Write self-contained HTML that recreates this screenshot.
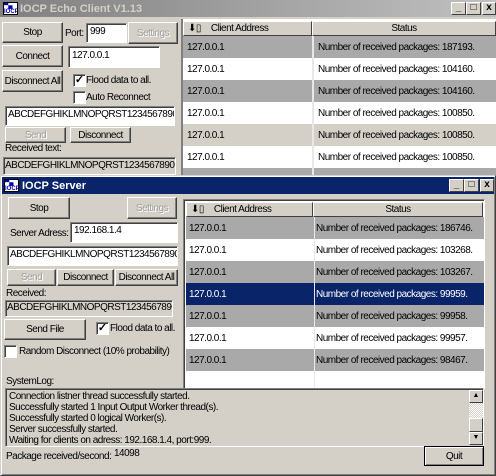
<!DOCTYPE html><html><head><style>
*{box-sizing:border-box;margin:0;padding:0}
body{width:496px;height:476px;background:#d4d0c8;font:10px "Liberation Sans",sans-serif;letter-spacing:-0.5px;position:relative;overflow:hidden;color:#000}
.a{position:absolute;white-space:nowrap}
.btn{position:absolute;background:#d4d0c8;border:1px solid;border-color:#fff #404040 #404040 #fff;box-shadow:inset -1px -1px 0 #808080;display:flex;align-items:center;justify-content:center;white-space:nowrap}
.dis{color:#a0a0a0;text-shadow:1px 1px 0 #fff}
.in{position:absolute;background:#fff;border:1px solid;border-color:#808080 #fff #fff #808080;box-shadow:inset 1px 1px 0 #404040;padding:2px 3px;white-space:nowrap;overflow:hidden}
.ro{background:#d4d0c8}
.cb{position:absolute;width:13px;height:13px;background:#fff;border:1px solid;border-color:#808080 #fff #fff #808080;box-shadow:inset 1px 1px 0 #404040;font-size:11px;line-height:10px;text-align:center;font-weight:bold;letter-spacing:0}
.title{position:absolute;height:17px;color:#fff;font-weight:bold;font-size:11px;letter-spacing:0;display:flex;align-items:center}
.tb{position:absolute;top:2px;width:15px;height:13px;background:#d4d0c8;border:1px solid;border-color:#fff #404040 #404040 #fff;font-size:10px;line-height:10px;text-align:center;color:#000;font-weight:bold;letter-spacing:0}
.row{position:absolute;left:0;right:0;height:22px;display:flex;align-items:center}
.row span{position:absolute;white-space:nowrap}
.hdr{position:absolute;height:15px;background:#d4d0c8;border:1px solid;border-color:#fff #404040 #404040 #fff;display:flex;align-items:center;white-space:nowrap}
.icon{position:absolute;left:3px;width:15px;height:13px;background:#fff;border:1px solid #000;font-size:6px;color:#00a;overflow:hidden;line-height:6px;letter-spacing:0}
</style></head><body>
<div class="title" style="left:0;top:0;width:496px;background:linear-gradient(90deg,#808080,#c0c0c0);color:#d4d0c8"><div class="icon" style="top:2px;background:#fff">▀▄<br>IOCP</div><span style="margin-left:20px">IOCP Echo Client V1.13</span></div>
<div class="tb" style="left:451px">_</div><div class="tb" style="left:466px">□</div><div class="tb" style="left:482px;width:14px">x</div>
<div class="btn" style="left:2px;top:22px;width:61px;height:21px">Stop</div>
<div class="a" style="left:65px;top:28px">Port:</div>
<div class="in" style="left:86px;top:23px;width:41px;height:20px">999</div>
<div class="btn dis" style="left:128px;top:22px;width:50px;height:22px">Settings</div>
<div class="btn" style="left:2px;top:45px;width:61px;height:22px">Connect</div>
<div class="in" style="left:68px;top:46px;width:92px;height:22px;padding-top:3px">127.0.0.1</div>
<div class="btn" style="left:2px;top:70px;width:61px;height:22px">Disconnect All</div>
<div class="cb" style="left:73px;top:74px">✓</div><div class="a" style="left:86px;top:75px">Flood data to all.</div>
<div class="cb" style="left:73px;top:91px"></div><div class="a" style="left:86px;top:92px">Auto Reconnect</div>
<div class="in" style="left:5px;top:106px;width:170px;height:20px;padding-left:2px">ABCDEFGHIKLMNOPQRST1234567890</div>
<div class="btn dis" style="left:5px;top:127px;width:61px;height:16px">Send</div>
<div class="btn" style="left:70px;top:127px;width:61px;height:16px">Disconnect</div>
<div class="a" style="left:5px;top:143px">Received text:</div>
<div class="in ro" style="left:3px;top:157px;width:173px;height:18px;padding-left:1px">ABCDEFGHIKLMNOPQRST1234567890</div>
<div class="a" style="left:181px;top:19px;width:315px;height:158px;background:#fff;border-left:2px solid #808080;overflow:hidden">
 <div class="hdr" style="left:0;top:2px;width:129px"><span style="margin-left:4px">⬇▯</span><span style="margin-left:10px">Client Address</span></div>
 <div class="hdr" style="left:129px;top:2px;width:184px;justify-content:center">Status</div>
 <div class="row" style="top:17px;background:#a9a9a9"><span style="left:4px">127.0.0.1</span><span style="left:135px">Number of received packages: 187193.</span></div>
 <div class="row" style="top:39px;background:#fff"><span style="left:4px">127.0.0.1</span><span style="left:135px">Number of received packages: 104160.</span></div>
 <div class="row" style="top:61px;background:#a9a9a9"><span style="left:4px">127.0.0.1</span><span style="left:135px">Number of received packages: 104160.</span></div>
 <div class="row" style="top:83px;background:#fff"><span style="left:4px">127.0.0.1</span><span style="left:135px">Number of received packages: 100850.</span></div>
 <div class="row" style="top:105px;background:#d4d0c8"><span style="left:4px">127.0.0.1</span><span style="left:135px">Number of received packages: 100850.</span></div>
 <div class="row" style="top:127px;background:#fff"><span style="left:4px">127.0.0.1</span><span style="left:135px">Number of received packages: 100850.</span></div>
 <div class="row" style="top:149px;background:#a9a9a9"></div>
 <div class="a" style="left:129px;top:17px;width:2px;height:140px;background:#e8e8e8"></div>
</div>
<div class="a" style="left:0;top:175px;width:496px;height:301px;background:#d4d0c8;border:1px solid;border-color:#d4d0c8 #404040 #404040 #d4d0c8;box-shadow:inset 1px 1px 0 #fff,inset -1px -1px 0 #808080"></div>
<div class="title" style="left:2px;top:177px;width:492px;background:#0a246a"><div class="icon" style="top:2px;left:2px">▀▄<br>IOCP</div><span style="margin-left:20px">IOCP Server</span></div>
<div class="tb" style="left:449px;top:179px">_</div><div class="tb" style="left:464px;top:179px">□</div><div class="tb" style="left:480px;top:179px;width:14px">x</div>
<div class="btn" style="left:8px;top:197px;width:62px;height:22px">Stop</div>
<div class="btn dis" style="left:127px;top:197px;width:50px;height:22px">Settings</div>
<div class="a" style="left:10px;top:228px">Server Adress:</div>
<div class="in" style="left:70px;top:222px;width:108px;height:21px">192.168.1.4</div>
<div class="in" style="left:7px;top:246px;width:171px;height:20px;padding-left:2px">ABCDEFGHIKLMNOPQRST1234567890</div>
<div class="btn dis" style="left:7px;top:269px;width:49px;height:17px">Send</div>
<div class="btn" style="left:57px;top:269px;width:57px;height:17px">Disconnect</div>
<div class="btn" style="left:115px;top:269px;width:63px;height:17px">Disconnect All</div>
<div class="a" style="left:6px;top:288px">Received:</div>
<div class="in ro" style="left:5px;top:300px;width:168px;height:17px;padding:1px 1px">ABCDEFGHIKLMNOPQRST1234567890</div>
<div class="btn" style="left:4px;top:319px;width:82px;height:21px">Send File</div>
<div class="cb" style="left:96px;top:322px">✓</div><div class="a" style="left:110px;top:323px">Flood data to all.</div>
<div class="cb" style="left:4px;top:345px"></div><div class="a" style="left:19px;top:346px">Random Disconnect (10% probability)</div>
<div class="a" style="left:6px;top:376px">SystemLog:</div>
<div class="a" style="left:183px;top:199px;width:302px;height:190px;background:#fff;border:1px solid;border-color:#808080 #fff #fff #808080;box-shadow:inset 1px 1px 0 #404040;overflow:hidden">
 <div class="hdr" style="left:2px;top:2px;width:127px"><span style="margin-left:4px">⬇▯</span><span style="margin-left:10px">Client Address</span></div>
 <div class="hdr" style="left:129px;top:2px;width:170px;justify-content:center">Status</div>
 <div class="row" style="top:17px;left:2px;background:#a9a9a9"><span style="left:3px">127.0.0.1</span><span style="left:130px">Number of received packages: 186746.</span></div>
 <div class="row" style="top:39px;left:2px;background:#fff"><span style="left:3px">127.0.0.1</span><span style="left:130px">Number of received packages: 103268.</span></div>
 <div class="row" style="top:61px;left:2px;background:#a9a9a9"><span style="left:3px">127.0.0.1</span><span style="left:130px">Number of received packages: 103267.</span></div>
 <div class="row" style="top:83px;left:2px;background:#0a246a;color:#fff"><span style="left:3px">127.0.0.1</span><span style="left:130px">Number of received packages: 99959.</span></div>
 <div class="row" style="top:105px;left:2px;background:#a9a9a9"><span style="left:3px">127.0.0.1</span><span style="left:130px">Number of received packages: 99958.</span></div>
 <div class="row" style="top:127px;left:2px;background:#fff"><span style="left:3px">127.0.0.1</span><span style="left:130px">Number of received packages: 99957.</span></div>
 <div class="row" style="top:149px;left:2px;background:#a9a9a9"><span style="left:3px">127.0.0.1</span><span style="left:130px">Number of received packages: 98467.</span></div>
 <div class="a" style="left:130px;top:17px;width:1px;height:172px;background:#e8e8e8"></div>
</div>
<div class="a" style="left:5px;top:388px;width:479px;height:59px;border:1px solid;border-color:#808080 #fff #fff #808080;box-shadow:inset 1px 1px 0 #404040;padding:2px 0 0 3px;font-size:10px;line-height:11px;white-space:nowrap">
Connection listner thread successfully started.<br>Successfully started 1 Input Output Worker thread(s).<br>Successfully started 0 logical Worker(s).<br>Server successfully started.<br>Waiting for clients on adress: 192.168.1.4, port:999.
</div>
<div class="a" style="left:469px;top:390px;width:14px;height:55px;background:repeating-conic-gradient(#fff 0 25%,#d4d0c8 0 50%) 0 0/2px 2px"></div>
<div class="tb" style="left:469px;top:390px;width:14px;font-size:7px">▲</div>
<div class="tb" style="left:469px;top:418px;width:14px;height:14px"></div>
<div class="tb" style="left:469px;top:432px;width:14px;font-size:7px">▼</div>
<div class="a" style="left:6px;top:451px">Package received/second:</div>
<div class="a" style="left:114px;top:448px">14098</div>
<div class="btn" style="left:424px;top:446px;width:60px;height:20px;border-color:#000;box-shadow:inset 1px 1px 0 #fff,inset -1px -1px 0 #808080">Quit</div>
</body></html>
